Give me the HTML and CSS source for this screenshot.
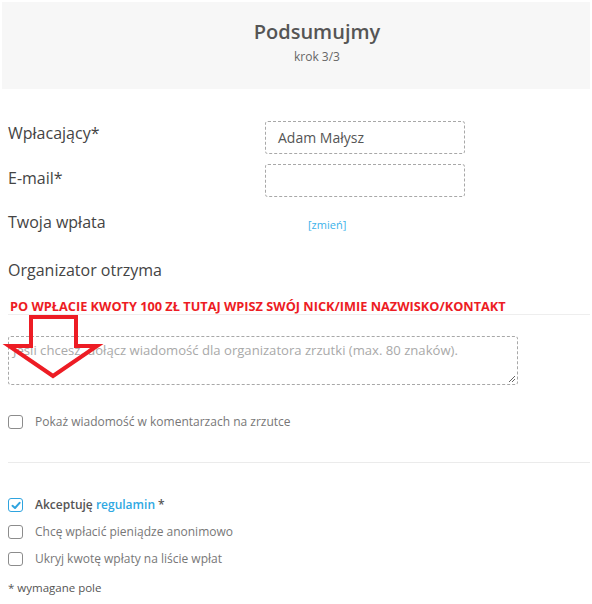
FILE: index.html
```html
<!DOCTYPE html>
<html lang="pl">
<head>
<meta charset="utf-8">
<title>Podsumujmy</title>
<link rel="stylesheet" href="styles.css">
</head>
<body>
<div class="page">
  <header class="header">
    <h1 class="title">Podsumujmy</h1>
    <div class="step">krok 3/3</div>
  </header>

  <div class="form">
    <div class="row row-first">
      <div class="label">Wpłacający*</div>
      <div class="input">Adam Małysz</div>
    </div>
    <div class="row row-second">
      <div class="label">E-mail*</div>
      <div class="input"></div>
    </div>
    <div class="row row-amount">
      <div class="label">Twoja wpłata</div>
      <div class="value"><a class="change">[zmień]</a></div>
    </div>
    <div class="row row-org">
      <div class="label">Organizator otrzyma</div>
    </div>

    <div class="notice"><span class="notice-text">PO WPŁACIE KWOTY 100 ZŁ TUTAJ WPISZ SWÓJ NICK/IMIE NAZWISKO/KONTAKT</span></div>

    <div class="message">
      <div class="textarea"><span class="placeholder">Jeśli chcesz, dołącz wiadomość dla organizatora zrzutki (max. 80 znaków).</span>
        <svg class="grip" width="8" height="8" viewBox="0 0 8 8"><path d="M7 1 L1 7 M7 4 L4 7" stroke="#666" stroke-width="1" fill="none"/></svg>
      </div>
      <svg class="arrow" width="110" height="80" viewBox="0 0 110 80">
        <polygon points="31,8 76,8 76,37 97,37 53,67 9,37 31,37" fill="none" stroke="#ed1c24" stroke-width="4" stroke-linejoin="miter"/>
      </svg>
    </div>

    <label class="check check-comment"><span class="box"></span><span class="check-text">Pokaż wiadomość w komentarzach na zrzutce</span></label>

    <div class="divider"></div>

    <div class="checks">
      <label class="check"><span class="box box-on"><svg width="10" height="9" viewBox="0 0 10 9"><path d="M1.5 4.8 L4 7 L8.6 1.8" stroke="#2fa4df" stroke-width="2" fill="none" stroke-linecap="round" stroke-linejoin="round"/></svg></span><span class="check-text strong">Akceptuję <a class="link">regulamin</a> *</span></label>
      <label class="check"><span class="box"></span><span class="check-text">Chcę wpłacić pieniądze anonimowo</span></label>
      <label class="check"><span class="box"></span><span class="check-text">Ukryj kwotę wpłaty na liście wpłat</span></label>
    </div>

    <div class="required">* wymagane pole</div>
  </div>
</div>
</body>
</html>
```

FILE: styles.css
```css
html, body {
  margin: 0;
  padding: 0;
  background: #ffffff;
}
body {
  font-family: "Open Sans", "DejaVu Sans", sans-serif;
  color: #444;
  width: 592px;
  height: 604px;
  overflow: hidden;
}
.page {
  padding-top: 2px;
}
.header {
  margin: 0 2px;
  height: 87px;
  box-sizing: border-box;
  background: #f7f7f7;
  text-align: center;
  padding-top: 16px;
  padding-left: 42px;
}
.title {
  margin: 0;
  font-size: 20px;
  line-height: 27px;
  font-weight: 600;
  color: #555;
}
.step {
  margin-top: 4px;
  font-size: 12px;
  line-height: 16px;
  color: #666;
}
.form {
  padding-left: 8px;
}
.row {
  display: flex;
  align-items: flex-start;
}
.label {
  width: 257px;
  flex: none;
  font-size: 16px;
  line-height: 22px;
  color: #444;
}
.row-first {
  margin-top: 32px;
}
.row-first .label {
  margin-top: 1px;
}
.row-second {
  margin-top: 10px;
}
.row-second .label {
  margin-top: 3px;
}
.input {
  width: 200px;
  height: 33px;
  box-sizing: border-box;
  border: 1px dashed #a8a8a8;
  border-radius: 3px;
  font-size: 14px;
  line-height: 31px;
  padding-left: 12px;
  color: #555;
}
.row-amount {
  margin-top: 12px;
  align-items: center;
}
.value {
  padding-left: 43px;
  padding-top: 3px;
}
.change {
  font-size: 11px;
  color: #3bb2ea;
}
.row-org {
  margin-top: 25px;
}
.notice {
  margin-top: 17px;
  margin-right: 2px;
  border-bottom: 1px solid #eeeeee;
  padding-left: 2px;
  height: 16px;
}
.notice-text {
  font-size: 12.75px;
  line-height: 16px;
  font-weight: 700;
  color: #ed1c24;
  display: block;
}
.message {
  position: relative;
  margin-top: 21px;
}
.textarea {
  position: relative;
  width: 510px;
  height: 49px;
  box-sizing: border-box;
  border: 1px dashed #a8a8a8;
  border-radius: 3px;
  padding: 4px 4px;
  font-size: 13.1px;
  line-height: 18px;
}
.placeholder {
  color: #a9a9a9;
}
.grip {
  position: absolute;
  right: 1px;
  bottom: 1px;
}
.arrow {
  position: absolute;
  left: -8px;
  top: -27px;
}
.check {
  display: flex;
  align-items: center;
  height: 16px;
}
.check-comment {
  margin-top: 29px;
}
.box {
  width: 15px;
  height: 14px;
  box-sizing: border-box;
  border: 1px solid #8c8c8c;
  border-radius: 3px;
  flex: none;
  display: flex;
  align-items: center;
  justify-content: center;
  margin-right: 12px;
  background: #fff;
}
.box-on {
  border-color: #2fa4df;
}
.check-text {
  font-size: 12px;
  line-height: 16px;
  color: #777;
}
.check-text.strong {
  font-weight: 600;
  color: #555;
}
.link {
  color: #2fa8e2;
}
.divider {
  margin-top: 32px;
  margin-right: 2px;
  border-top: 1px solid #ebebeb;
}
.checks {
  margin-top: 34px;
  display: flex;
  flex-direction: column;
  gap: 11px;
}
.required {
  margin-top: 13px;
  font-size: 11.5px;
  line-height: 15px;
  color: #555;
}
```
